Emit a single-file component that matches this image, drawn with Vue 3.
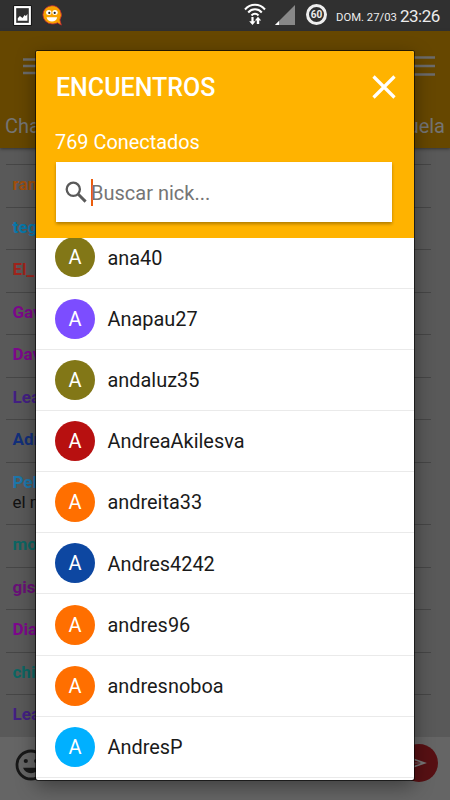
<script setup>
import { ref } from 'vue'

const query = ref('')
const messages = [
  { nick: 'ram', color: '#a04f0c' },
  { nick: 'teg', color: '#0878ab' },
  { nick: 'El_', color: '#a0241c' },
  { nick: 'Gav', color: '#7d088c' },
  { nick: 'Dav', color: '#7d088c' },
  { nick: 'Lea', color: '#432083' },
  { nick: 'Adr', color: '#122f7a' },
  { nick: 'Pel', color: '#1d77ab', text: 'el m' },
  { nick: 'mo', color: '#0d6663' },
  { nick: 'gis', color: '#681076' },
  { nick: 'Dia', color: '#7d088c' },
  { nick: 'chi', color: '#0d6663' },
  { nick: 'Lea', color: '#432083' }
]
const users = [
  { nick: 'ana40', tone: 'olive' },
  { nick: 'Anapau27', tone: 'violet' },
  { nick: 'andaluz35', tone: 'olive' },
  { nick: 'AndreaAkilesva', tone: 'red' },
  { nick: 'andreita33', tone: 'orange' },
  { nick: 'Andres4242', tone: 'blue' },
  { nick: 'andres96', tone: 'orange' },
  { nick: 'andresnoboa', tone: 'orange' },
  { nick: 'AndresP', tone: 'sky' }
]
</script>

<template>
  <div class="screen">
    <header class="status">
      <svg class="picture" viewBox="0 0 18 20">
        <rect x="0" y="0" width="18" height="20" rx="1.5" fill="#151515" />
        <rect x="1" y="1" width="16" height="18" fill="#fff" />
        <rect x="3" y="3" width="12" height="14" fill="#303030" />
        <path d="M4.5 15v-2.5l2-2 2.5 1.8 2-2.8 1.2 1 1.5-2V15z" fill="#fff" />
      </svg>
      <svg class="smiley" viewBox="0 0 20 21">
        <path d="M10 .7a9 9 0 1 0 0 18.2c2.500 .2 4.200-.5 5.300-1.100l4 2.300-1.400-5.200A9.200 9.200 0 0 0 10 .7z" fill="#f8a300" stroke="#c32836" stroke-width=".8" />
        <ellipse cx="6.800" cy="7.600" rx="2.700" ry="2.500" fill="#fff" />
        <ellipse cx="13" cy="7.600" rx="2.700" ry="2.500" fill="#fff" />
        <circle cx="7.300" cy="7.900" r="1.100" fill="#222" />
        <circle cx="12.700" cy="7.900" r="1.100" fill="#222" />
        <path d="M4.600 12.200h10.600c-.6 3-2.600 4.300-5.200 4.300s-4.800-1.300-5.400-4.300z" fill="#fff" />
      </svg>
      <span class="spacer"></span>
      <svg class="wifi" viewBox="0 0 22 23">
        <g fill="none" stroke="#fff" stroke-width="2">
          <path d="M1 6.500C6.500 .2 15.500 .2 21 6.500" />
          <path d="M4.200 9.500C8 5.300 14 5.300 17.800 9.500" />
          <path d="M7.500 12.500C9.500 10.300 12.500 10.300 14.500 12.500" />
        </g>
        <path d="M7.400 14h2.200v4.200h2L8.500 22l-3.300-3.800h2.200zM12.800 21V17.400h-2L14 13.800l3.200 3.600h-2V21z" fill="#fff" />
      </svg>
      <svg class="signal" viewBox="0 0 20 20">
        <path d="M20 0v20H0z" fill="#888" />
        <path d="M4 16v4H0z" fill="#fff" />
      </svg>
      <span class="battery">60</span>
      <span class="date">DOM. 27/03</span>
      <span class="time">23:26</span>
    </header>

    <div class="appbar">
      <div class="menus">
        <svg class="burger left" viewBox="0 0 22 18"><path d="M0 1.500h22M0 8h22M0 15h22" /></svg>
        <svg class="burger right" viewBox="0 0 22 20"><path d="M0 1.500h22M0 10h22M0 18.500h22" /></svg>
      </div>
      <div class="tabs"><span>Cha</span><span>uela</span></div>
    </div>

    <main class="chat">
      <div v-for="(m, i) in messages" :key="i" class="message" :class="{ long: m.text }">
        <b :style="{ color: m.color }">{{ m.nick }}</b>
        <span v-if="m.text">{{ m.text }}</span>
      </div>
    </main>

    <footer class="composer">
      <svg class="emoji" viewBox="0 0 32 32">
        <circle cx="16" cy="16" r="14" fill="none" stroke="#181818" stroke-width="2.800" />
        <circle cx="10.800" cy="12" r="2.100" fill="#181818" />
        <circle cx="21.200" cy="12" r="2.100" fill="#181818" />
        <path d="M8 18.800h16c-1.300 3.400-4.300 5.400-8 5.400s-6.700-2-8-5.400z" fill="#181818" />
      </svg>
      <svg class="send" viewBox="0 0 38 38">
        <circle cx="19" cy="19" r="19" fill="#571013" />
        <path d="M8 12.500l19 6.500-19 6.500 3-6.500z" fill="#777" />
        <path d="M10 15l11 3.400-11 .3zM10 23l11-3.400-11-.3z" fill="#571013" />
      </svg>
    </footer>

    <section class="dialog">
      <div class="dialog-head">
        <div class="title-row">
          <h1>ENCUENTROS</h1>
          <svg class="close" viewBox="0 0 24 24"><path d="M1.500 1.500l21 21m0-21l-21 21" /></svg>
        </div>
        <p class="count">769 Conectados</p>
        <label class="search">
          <svg class="lens" viewBox="0 0 22 22">
            <circle cx="8.300" cy="8.300" r="6.600" fill="none" stroke="#5a5a5a" stroke-width="2.300" />
            <path d="M13 13l7.600 7.600" stroke="#5a5a5a" stroke-width="2.900" />
          </svg>
          <span class="caret"></span>
          <input v-model="query" placeholder="Buscar nick..." />
        </label>
      </div>
      <div class="list">
        <div v-for="u in users" :key="u.nick" class="user">
          <span class="avatar" :class="u.tone">A</span>
          <span class="nick">{{ u.nick }}</span>
        </div>
      </div>
    </section>
  </div>
</template>

<style>
body { margin: 0; }
</style>

<style scoped>
* { box-sizing: border-box; }
.screen {
  position: relative;
  display: flex;
  flex-direction: column;
  width: 450px;
  height: 800px;
  overflow: hidden;
  background: #595959;
  font-family: Roboto, "Liberation Sans", sans-serif;
}
svg { display: block; flex: none; }
.status {
  display: flex;
  flex: none;
  align-items: flex-start;
  height: 31px;
  padding: 0 10px 0 13px;
  background: #303030;
  color: #ececec;
}
.picture { width: 19px; height: 21px; margin-top: 5px; }
.smiley { width: 20px; height: 21px; margin: 5px 0 0 10px; }
.spacer { flex: 1; }
.wifi { width: 22px; height: 23px; margin: 3px 9px 0 0; }
.signal { width: 20px; height: 20px; margin: 5px 11px 0 0; }
.battery {
  width: 21px;
  height: 21px;
  margin: 4px 9px 0 0;
  border: 3px solid #eee;
  border-radius: 50%;
  font-size: 10px;
  font-weight: 700;
  line-height: 15px;
  text-align: center;
}
.date { width: 64px; font-size: 11.300px; line-height: 35px; white-space: nowrap; }
.time { width: 40px; font-size: 17px; line-height: 32px; white-space: nowrap; letter-spacing: -.5px; }
.appbar {
  flex: none;
  height: 117px;
  padding: 24px 5px 0 5px;
  background: #664700;
  box-shadow: 0 1px 3px #333;
  color: #747474;
}
.menus { display: flex; justify-content: space-between; height: 58px; padding: 0 10px 0 18px; }
.burger { width: 22px; fill: none; stroke: #6b6b6b; stroke-width: 2.700; }
.left { height: 18px; margin-top: 3px; }
.right { height: 20px; margin-top: 1px; }
.tabs { display: flex; justify-content: space-between; font-size: 20px; line-height: 27px; }
.chat { flex: none; height: 589px; padding: 16px 19px 0 6px; }
.message {
  display: flex;
  flex-direction: column;
  height: 42.500px;
  padding: 9px 6px 0 6.500px;
  border-top: 1px solid #464646;
  color: #111;
  font-size: 17px;
  line-height: 21px;
}
.message.long { height: 62.500px; }
.message.long span { margin-top: -1px; }
.composer {
  display: flex;
  flex: 1;
  justify-content: space-between;
  padding: 7px 12px 0 15px;
  background: #656565;
}
.emoji { width: 32px; height: 32px; margin-top: 5px; }
.send { width: 38px; height: 38px; }
.dialog {
  position: absolute;
  top: 51px;
  left: 36px;
  display: flex;
  flex-direction: column;
  width: 378px;
  height: 729px;
  overflow: hidden;
  border-radius: 2px;
  background: #fff;
  box-shadow: 0 0 0 1px rgba(0, 0, 0, .6), 0 6px 20px rgba(0, 0, 0, .4);
}
.dialog-head { flex: none; height: 187px; padding: 20px 22px 0 20px; background: #ffb300; color: #fff; }
.title-row { display: flex; justify-content: space-between; height: 56px; }
h1 { margin: 1px 0 0; font-size: 25px; font-weight: 500; line-height: 32px; }
.close { width: 24px; height: 24px; margin: 4px -4px 0 0; fill: none; stroke: #fff; stroke-width: 3.200; }
.count { height: 35px; margin: 0 0 0 -1px; font-size: 19.900px; line-height: 31px; }
.search {
  display: flex;
  align-items: center;
  height: 60px;
  padding-left: 9px;
  background: #fff;
  box-shadow: 0 2px 3px rgba(0, 0, 0, .3);
}
.lens { width: 22px; height: 22px; }
.caret { width: 2px; height: 27px; margin-left: 4px; background: #eb5c0c; }
input {
  flex: 1;
  min-width: 0;
  margin-left: -2px;
  padding: 2px 0 0;
  border: 0;
  outline: 0;
  background: transparent;
  color: #555;
  font: 20px Roboto, "Liberation Sans", sans-serif;
}
input::placeholder { color: #757575; }
.list { display: flex; flex: 1; flex-direction: column; justify-content: flex-end; min-height: 0; padding-bottom: 2px; overflow: hidden; }
.user {
  display: flex;
  flex: none;
  align-items: center;
  gap: 12.500px;
  height: 61.200px;
  padding-left: 19px;
  border-bottom: 1px solid #eaeaea;
}
.avatar {
  width: 40px;
  height: 40px;
  border-radius: 50%;
  color: #fff;
  font-size: 20px;
  line-height: 40px;
  text-align: center;
}
.nick { padding-top: 2.500px; color: #1a1a1a; font-size: 19.900px; line-height: 24px; }
.olive { background: #827717; }
.violet { background: #7c4dff; }
.red { background: #b71010; }
.orange { background: #ff6f00; }
.blue { background: #0d47a1; }
.sky { background: #00b0ff; }
</style>
